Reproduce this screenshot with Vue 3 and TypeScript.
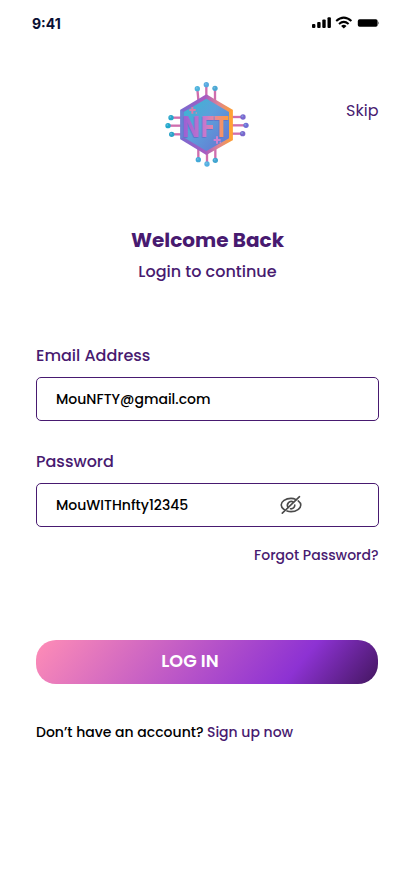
<script setup lang="ts">
import { ref } from 'vue'

const email = ref('MouNFTY@gmail.com')
const password = ref('MouWITHnfty12345')

const pins: { x: number; y: number; tx: number; ty: number; tone: string }[] = [
  { x: 127, y: 56, tx: 131, ty: 100, tone: '#4db3dc' },
  { x: 154, y: 44, tx: 154, ty: 84, tone: '#57a9e0' },
  { x: 180, y: 55, tx: 180, ty: 100, tone: '#4aa7d2' },
  { x: 48, y: 143, tx: 84, ty: 143, tone: '#25a5c9' },
  { x: 39, y: 167, tx: 84, ty: 167, tone: '#22a9cb' },
  { x: 50, y: 193, tx: 84, ty: 193, tone: '#2ba3c8' },
  { x: 264, y: 141, tx: 228, ty: 141, tone: '#7a68cf' },
  { x: 273, y: 166, tx: 228, ty: 166, tone: '#6f6ed6' },
  { x: 263, y: 191, tx: 228, ty: 191, tone: '#7967cb' },
  { x: 130, y: 269, tx: 130, ty: 232, tone: '#43a9d8' },
  { x: 156, y: 282, tx: 156, ty: 245, tone: '#55b1e2' },
  { x: 181, y: 271, tx: 181, ty: 232, tone: '#3fa4cf' },
]
</script>

<template>
  <main class="screen">
    <header class="status">
      <span class="time">9:41</span>
      <svg class="signals" width="68" height="14" viewBox="0 0 68 14">
        <rect x="0" y="8" width="3.4" height="4" rx="1" />
        <rect x="5.2" y="6" width="3.4" height="6" rx="1" />
        <rect x="10.3" y="3.6" width="3.4" height="8.4" rx="1" />
        <rect x="15.5" y="1.3" width="3.4" height="10.7" rx="1" />
        <g fill="none" stroke="#000" stroke-width="2">
          <path d="M24.2 5.1Q31.8-1.8 39.4 5.1" />
          <path d="M27 8Q31.8 3.8 36.6 8" />
        </g>
        <path d="M29.1 9.9Q31.8 7.7 34.5 9.9L31.8 12.6Z" />
        <rect x="45.8" y="3.2" width="19.8" height="7.6" rx="1.8" />
        <path d="M66 5.2Q67.2 7 66 8.8Z" />
      </svg>
    </header>

    <section class="hero">
      <svg class="logo" width="104" height="110" viewBox="0 0 312 330">
        <defs>
          <linearGradient id="rim" x1="0" y1="0" x2="1" y2="0">
            <stop offset="0" stop-color="#786bd0" />
            <stop offset=".48" stop-color="#a85bc1" />
            <stop offset=".72" stop-color="#dc8495" />
            <stop offset="1" stop-color="#ffa02f" />
          </linearGradient>
          <linearGradient id="face" x1="0" y1="0" x2="1" y2="1">
            <stop offset="0" stop-color="#38b9d0" />
            <stop offset=".45" stop-color="#5c9fdb" />
            <stop offset="1" stop-color="#6572cf" />
          </linearGradient>
          <linearGradient id="letters" gradientUnits="userSpaceOnUse" x1="110" y1="0" x2="285" y2="0">
            <stop offset="0" stop-color="#9c60d2" />
            <stop offset=".48" stop-color="#c878cc" />
            <stop offset=".68" stop-color="#e8889a" />
            <stop offset="1" stop-color="#ff9d35" />
          </linearGradient>
        </defs>
        <g v-for="(pin, i) in pins" :key="i">
          <path :d="`M${pin.x} ${pin.y}L${pin.tx} ${pin.ty}`" stroke="#cf6eae" stroke-width="7" />
          <circle :cx="pin.x" :cy="pin.y" r="8" :fill="pin.tone" />
          <circle :cx="pin.x - 2" :cy="pin.y - 2" r="3" fill="#8bc9f0" opacity=".5" />
        </g>
        <path d="M154 73L233 119V211L154 255L76 208V119Z" fill="url(#rim)" />
        <path d="M154 86L222 126V205L154 243L86 202V126Z" fill="url(#face)" />
        <path d="M76 119V208L86 202V126Z" fill="#6a83d3" />
        <path d="M222 126L233 119V211L222 205Z" fill="#ffa234" />
        <text class="mark" transform="scale(.78 1)" x="106 178 226" y="202" fill="url(#letters)">NFT</text>
        <g fill="none" stroke-width="6">
          <path d="M103 120H122M112 111V131" stroke="#da7ca8" />
          <path d="M176 210H197M186 199V221" stroke="#ce80d0" />
        </g>
        <circle cx="124" cy="129" r="2.5" fill="#d78dac" />
        <circle cx="196" cy="217" r="2.5" fill="#c583d8" />
      </svg>
      <a class="skip">Skip</a>
    </section>

    <section class="intro">
      <h1>Welcome Back</h1>
      <p>Login to continue</p>
    </section>

    <form class="form" @submit.prevent>
      <label class="label">Email Address</label>
      <div class="field"><span>{{ email }}</span></div>
      <label class="label label-password">Password</label>
      <div class="field">
        <span>{{ password }}</span>
        <svg class="eye" width="22" height="20" viewBox="0 0 22 20" fill="none" stroke="#4a4a4a" stroke-width="1.6" stroke-linecap="round">
          <path d="M4.3 14.7C2.4 13.3 1.2 11.5 1.2 10C1.2 6.7 5.5 3.4 11 3.4C12.9 3.4 14.7 3.9 16.2 4.6M18.2 5.9C19.8 7.1 20.8 8.6 20.8 10C20.8 13.3 16.5 16.6 11 16.6C9.6 16.6 8.2 16.3 7 15.9" />
          <path d="M8.2 12.5A3.8 3.8 0 0 1 13.4 7.1M14.8 10A3.8 3.8 0 0 1 10.5 13.8" />
          <path d="M2.3 18.2L19.5 1.7" />
        </svg>
      </div>
      <a class="forgot">Forgot Password?</a>
      <button class="login" type="submit">LOG IN</button>
    </form>

    <p class="signup"><span class="question">Don’t have an account?</span><a>Sign up now</a></p>
  </main>
</template>

<style>
body {
  background: #fff;
}
</style>

<style scoped>
.screen {
  box-sizing: border-box;
  width: 414px;
  height: 896px;
  padding: 0 35px 0 36px;
  overflow: hidden;
  background: #fff;
  color: #481a70;
  font-family: Poppins, Inter, sans-serif;
  font-weight: 500;
  white-space: nowrap;
}

.status {
  display: flex;
  justify-content: space-between;
  align-items: center;
  height: 46px;
  margin: 0 -1px 0 -4px;
}

.time {
  padding-top: 1px;
  color: #0a1034;
  font: 700 14px/20px Inter, sans-serif;
}

.hero {
  display: grid;
  grid-template-columns: 119px 104px 1fr;
  height: 110px;
  margin-top: 24px;
}

.logo {
  grid-column: 2;
}

.mark {
  font-family: Inter, sans-serif;
  font-size: 87px;
  font-weight: 800;
  filter: drop-shadow(-2px 3px 0 #5f76cb);
}

.skip {
  justify-self: end;
  margin: 29px .5px 0 0;
  font-size: 16px;
  font-weight: 400;
  line-height: 24px;
}

.intro {
  margin-top: 45px;
  text-align: center;
}

h1 {
  margin: 0;
  font-size: 20px;
  font-weight: 700;
  line-height: 30px;
}

.intro p {
  margin: 5px 0 0;
  font-size: 16px;
  line-height: 24px;
}

.form {
  display: flex;
  flex-direction: column;
  margin-top: 60px;
}

.label {
  font-size: 16px;
  line-height: 24px;
}

.label-password {
  margin-top: 29px;
}

.field {
  display: flex;
  box-sizing: border-box;
  align-items: center;
  height: 44px;
  margin-top: 9px;
  padding: 0 76px 0 19px;
  border: 1px solid #481a70;
  border-radius: 5px;
  color: #000;
  font-size: 14px;
  line-height: 21px;
}

.eye {
  margin-left: auto;
}

.forgot {
  align-self: flex-end;
  margin: 17px .5px 0 0;
  font-size: 14px;
  line-height: 22px;
}

.login {
  width: 342px;
  height: 44px;
  margin-top: 74px;
  padding: 0 34px 2px 0;
  border: 0;
  border-radius: 20px;
  background: linear-gradient(129deg, #ff8db6 0%, #8d32d3 75%, #43165f 100%);
  color: #fff;
  font: inherit;
  font-size: 17.6px;
  font-weight: 600;
  line-height: 24px;
}

.signup {
  display: flex;
  gap: 3.5px;
  margin: 37px 0 0;
  font-size: 14px;
  line-height: 22px;
}

.question {
  color: #000;
}
</style>
